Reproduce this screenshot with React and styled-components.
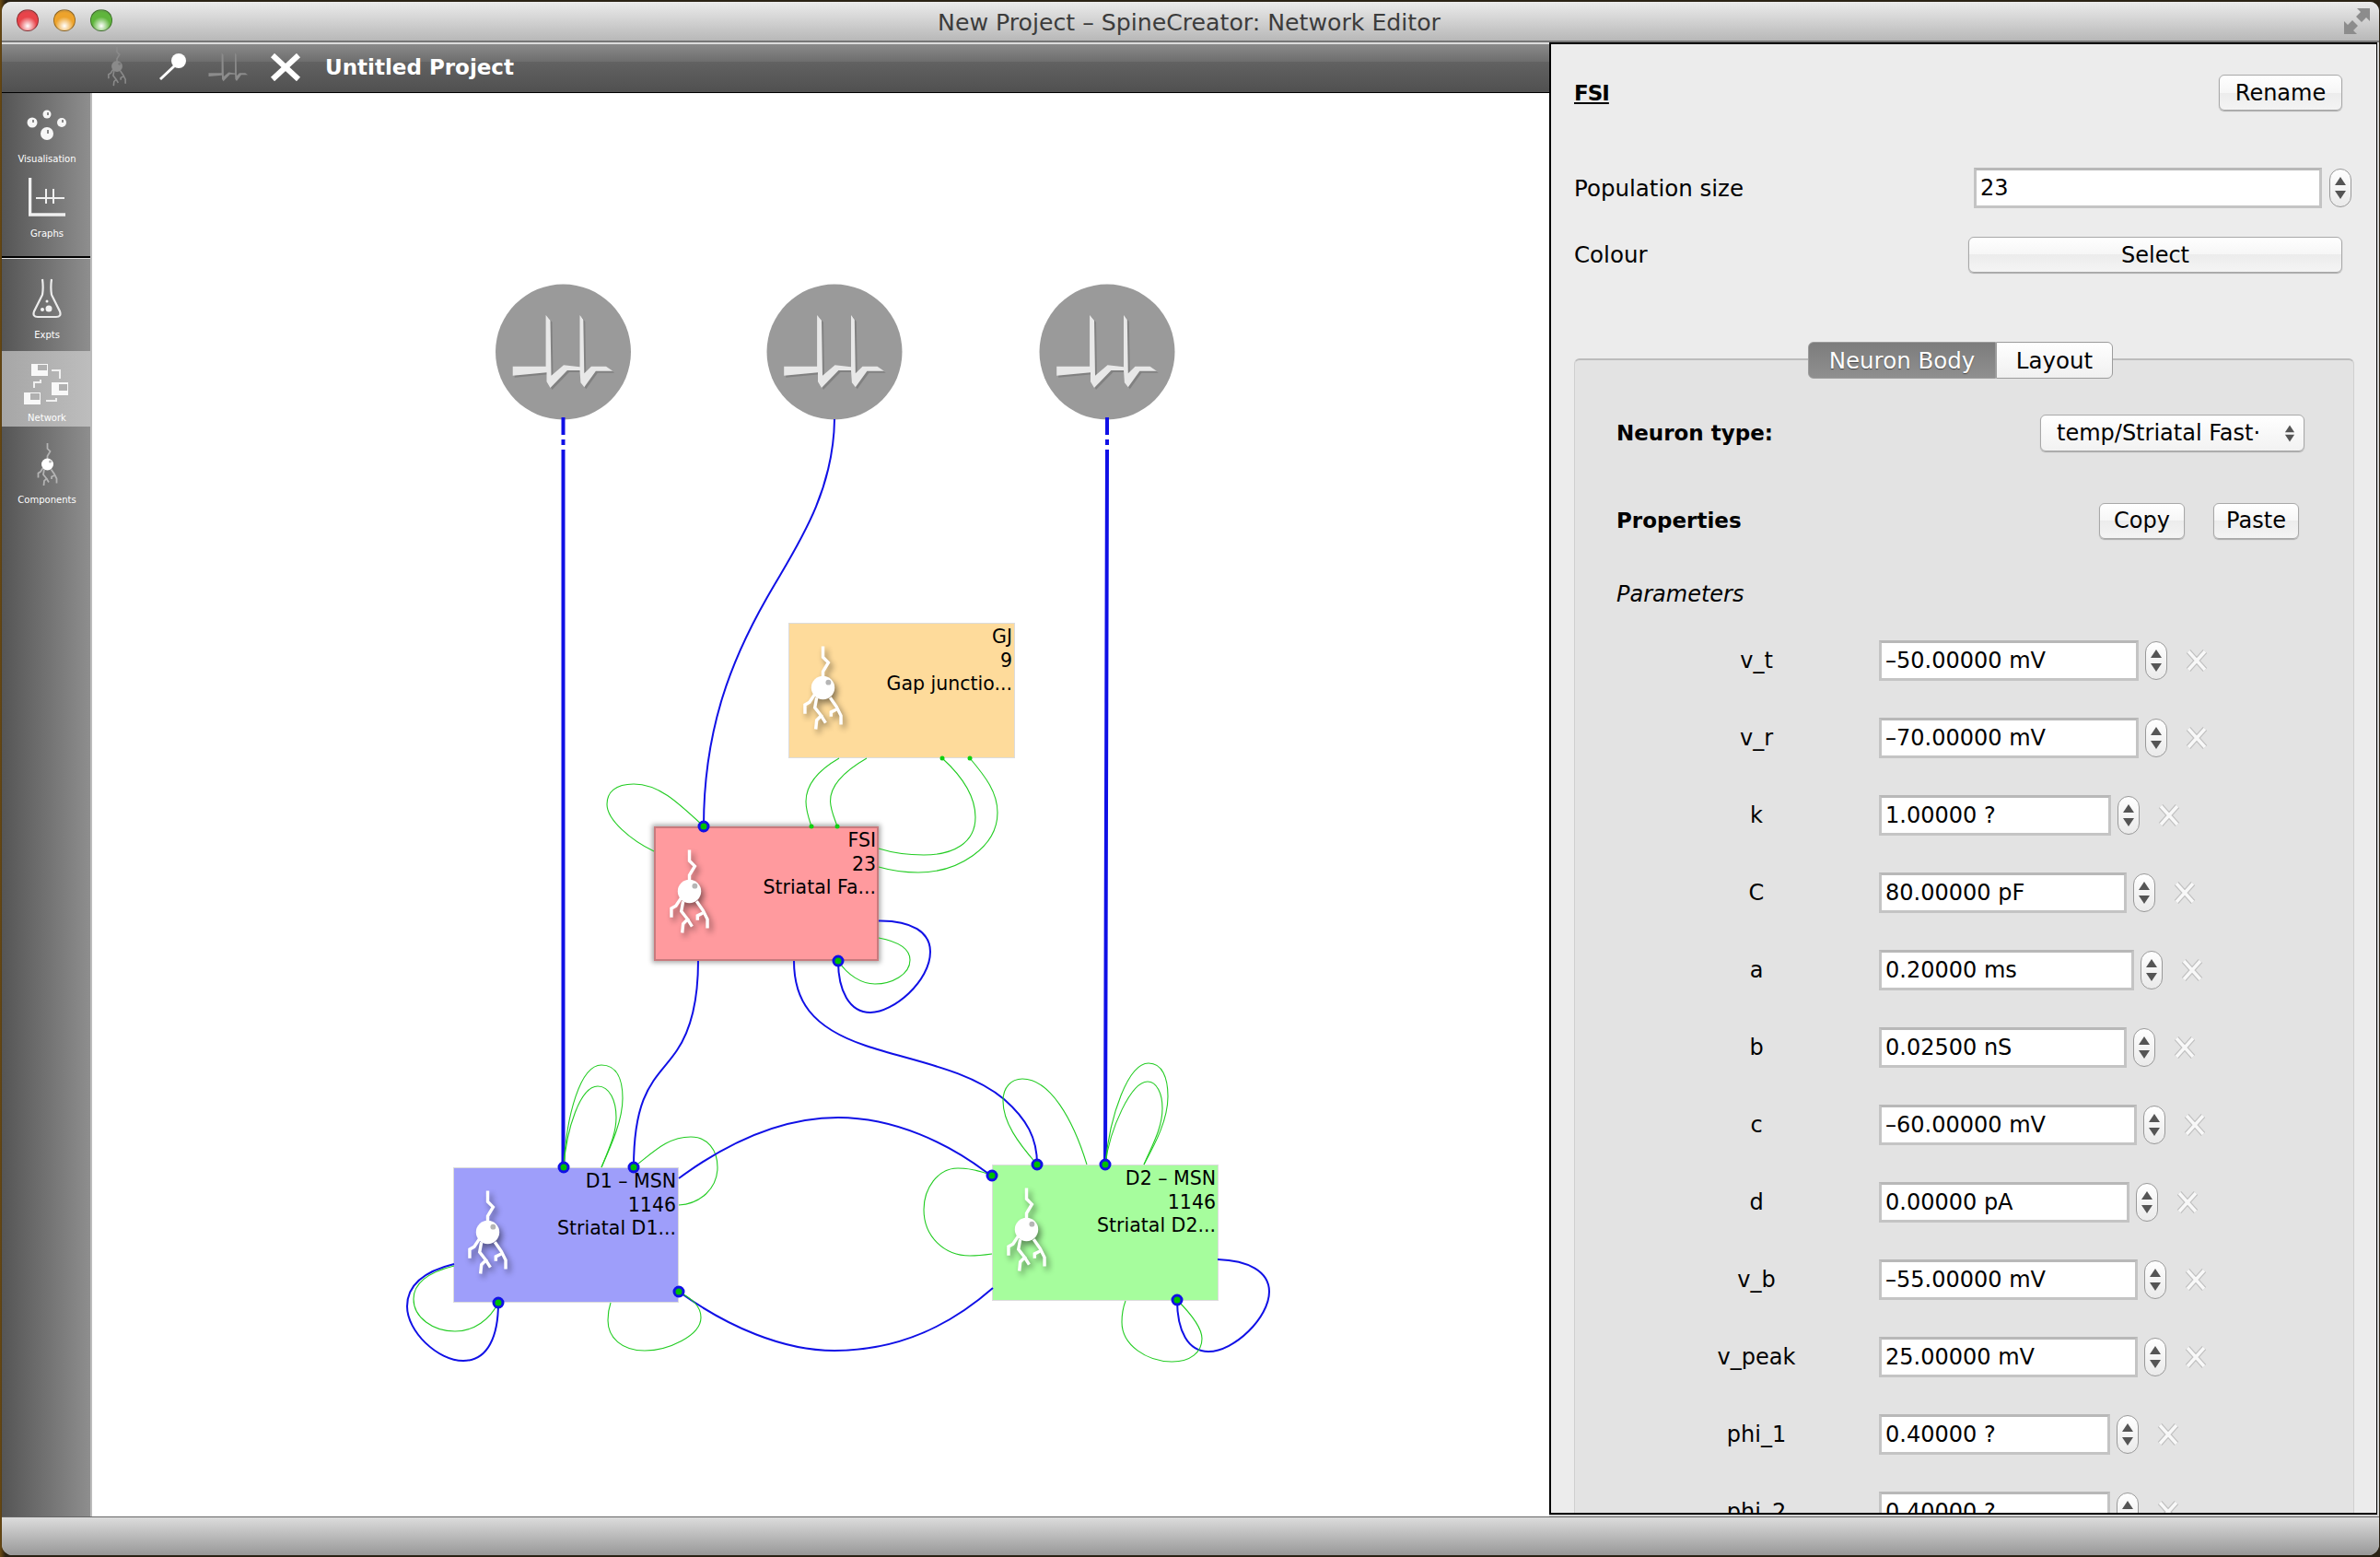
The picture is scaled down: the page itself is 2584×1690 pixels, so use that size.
import React from "react";
import styled, { createGlobalStyle } from "styled-components";

const GlobalStyle = createGlobalStyle`
    html, body {
        margin: 0;
        padding: 0;
        background: #2a2214;
    }
    * { box-sizing: border-box; }
    body {
        font-family: "DejaVu Sans", "Noto Sans", sans-serif;
        color: #000;
    }
`;

const SPIKE_POINTS = "-54.8,25.7 -54.8,15.7 -18.9,15.7 -18.9,-40 -14,-34.3 -13,25.7 .5,14.3 18,16.3 18,-40 21.8,-35 22.8,23.3 30.5,15.7 46.5,15.7 53.8,20.7 35.4,20.7 22.8,38.3 18.9,33.3 18,20 4.4,20 -14,39 -18,32.3 -18,22.3";

const SPIKE_SOURCES = [611.5, 906, 1202];

const WIRES = [
    // spike sources
    { kind: "thick", d: "M611.5 453V472M611.5 477V483M611.5 488V1267" },
    { kind: "thick", d: "M1202 453V472M1202 477V483M1202 488L1200 1264" },
    { kind: "blue", d: "M906 455C905 540 860 600 832 650C795 715 764 790 764 897" },
    // FSI
    { kind: "green", d: "M764 897C735 870 715 851 688 851C668 851 659 860 659 873C659 890 685 912 710 924" },
    { kind: "green", d: "M911 823C885 838 875 853 875 870C875 880 878 888 881 897" },
    { kind: "green", d: "M941 823C915 838 901 853 901.5 870C902 880 906 888 909 897" },
    { kind: "green", d: "M1023 823C1045 843 1059 865 1059 887C1059 915 1035 928 1003 928C985 928 970 926 954 921" },
    { kind: "green", d: "M1053 823C1070 843 1083 860 1083 882C1083 920 1040 947 997 947C980 947 968 945 954 941" },
    { kind: "blue", d: "M954 999.5C990 999 1010 1012 1010 1033C1010 1065 970 1099 945 1099C922 1099 910 1075 910 1043" },
    { kind: "green", d: "M954 1018C975 1022 988 1030 988 1042C988 1058 968 1068 950 1068C935 1068 920 1058 910 1043" },
    { kind: "blue", d: "M758 1043C758 1080 752 1115 735 1140C715 1170 688 1180 688 1267" },
    { kind: "blue", d: "M862 1043C862 1085 880 1115 940 1135C990 1152 1050 1160 1090 1193C1115 1215 1126 1235 1126 1264" },
    // D1
    { kind: "green", d: "M612 1267C615 1210 630 1156 653 1156C670 1156 676 1172 676 1192C676 1215 665 1240 653 1267" },
    { kind: "green", d: "M612 1267C615 1225 630 1179 649 1179C662 1179 669 1195 669 1213C669 1230 662 1245 653 1267" },
    { kind: "green", d: "M688 1267C710 1250 725 1234 750 1234C768 1234 779 1248 779 1267C779 1290 760 1307 737 1308" },
    { kind: "blue", d: "M737 1279C790 1240 850 1213 910 1213C970 1213 1030 1240 1077 1277" },
    { kind: "blue", d: "M737 1402C790 1440 850 1466 906 1466C975 1466 1030 1440 1078 1398" },
    { kind: "green", d: "M737 1402C752 1410 761 1418 761 1430C761 1450 725 1466 700 1466C675 1466 660 1452 660 1433C660 1425 661 1420 663 1414" },
    { kind: "blue", d: "M493 1372C460 1380 442 1395 442 1418C442 1445 475 1477 503 1477C530 1477 541 1450 541 1414" },
    { kind: "green", d: "M493 1374C465 1381 449 1393 449 1410C449 1430 470 1445 494 1445C515 1445 532 1432 541 1414" },
    // D2
    { kind: "green", d: "M1077 1276C1065 1271 1052 1268 1040 1268C1018 1268 1003 1290 1003 1313C1003 1342 1025 1363 1053 1363C1062 1363 1070 1362 1077 1361" },
    { kind: "green", d: "M1126 1264C1105 1240 1089 1218 1089 1195C1089 1180 1098 1171 1110 1171C1140 1171 1165 1215 1180 1264" },
    { kind: "green", d: "M1200 1264C1205 1210 1225 1154 1247 1154C1262 1154 1268 1170 1268 1190C1268 1215 1255 1240 1242 1264" },
    { kind: "green", d: "M1200 1264C1205 1225 1228 1174 1246 1174C1256 1174 1262 1187 1262 1203C1262 1225 1250 1245 1242 1264" },
    { kind: "blue", d: "M1322 1367C1355 1368 1378 1380 1378 1402C1378 1430 1340 1467 1312 1467C1290 1467 1278 1445 1278 1411" },
    { kind: "green", d: "M1222 1412C1219 1420 1218 1427 1218 1435C1218 1460 1245 1478 1273 1478C1292 1478 1305 1468 1305 1453C1305 1440 1292 1425 1278 1411" },
];

const RING_DOTS = [[764, 897], [910, 1043], [612, 1267], [688, 1267], [541, 1414], [737, 1402], [1077, 1276], [1126, 1264], [1200, 1264], [1278, 1411]];
const SMALL_DOTS = [[881, 897], [909, 897], [1023, 823], [1053, 823]];

const NODES = [
    { x: 856, y: 676, w: 246, h: 147, bg: "#fedb9b", lines: ["GJ", "9", "Gap junctio..."] },
    { x: 710, y: 897, w: 244, h: 146, bg: "#ff9a9e", selected: true, lines: ["FSI", "23", "Striatal Fa..."] },
    { x: 492, y: 1267, w: 245, h: 147, bg: "#9e9efa", lines: ["D1 – MSN", "1146", "Striatal D1..."] },
    { x: 1077, y: 1264, w: 246, h: 148, bg: "#a6fd9d", lines: ["D2 – MSN", "1146", "Striatal D2..."] },
];

const PARAMS = [
    ["v_t", "–50.00000 mV", 282],
    ["v_r", "–70.00000 mV", 282],
    ["k", "1.00000 ?", 252],
    ["C", "80.00000 pF", 269],
    ["a", "0.20000 ms", 277],
    ["b", "0.02500 nS", 269],
    ["c", "–60.00000 mV", 280],
    ["d", "0.00000 pA", 272],
    ["v_b", "–55.00000 mV", 281],
    ["v_peak", "25.00000 mV", 281],
    ["phi_1", "0.40000 ?", 251],
    ["phi_2", "0.40000 ?", 251],
];

function NeuronGlyph({ color = "#fff", soma = "#fff", eye = "#b5b5b5", width = 43, height = 93 }) {
    return (
        <svg width={width} height={height} viewBox="0 0 44 94">
            <g fill="none" stroke={color} strokeWidth="3.500">
                <polyline points="22,0 22,12 28,18 22,28 22,36" />
                <polyline points="13,53 7,62 2,65 2,75" />
                <polyline points="15,57 13,68 20,77 15,82 14,92" />
                <polyline points="20,77 25,85" />
                <polyline points="30,57 37,67 42,77 42,87" />
                <polyline points="37,70 31,73 31,78" />
            </g>
            <circle cx="22" cy="46" r="13" fill={soma} />
            <circle cx="28" cy="40" r="3" fill={eye} />
        </svg>
    );
}

function SpikesGlyph({ color, width, height }) {
    return (
        <svg width={width} height={height} viewBox="-56 -42 112 84">
            <polygon points={SPIKE_POINTS} fill={color} />
        </svg>
    );
}

function VisualisationIcon() {
    return (
        <svg width="44" height="34" viewBox="0 0 44 34">
            <g fill="#f6f6f6">
                <circle cx="6" cy="14" r="5.500" />
                <circle cx="22" cy="5" r="4.500" />
                <circle cx="38" cy="14" r="5" />
                <circle cx="22" cy="26" r="7" />
            </g>
            <g stroke="#666" strokeWidth="1.500">
                <line x1="7" y1="11" x2="7" y2="14" />
                <line x1="23" y1="3" x2="23" y2="6" />
                <line x1="39" y1="11" x2="39" y2="14" />
                <line x1="23" y1="22" x2="23" y2="26" />
            </g>
        </svg>
    );
}

function GraphsIcon() {
    return (
        <svg width="40" height="42" viewBox="0 0 40 42">
            <path d="M1.500 0V40H40" fill="none" stroke="#f0f0f0" strokeWidth="3.500" />
            <path d="M8 22H39M19 12V28M27 12V28" fill="none" stroke="#f0f0f0" strokeWidth="2" />
        </svg>
    );
}

function ExptsIcon() {
    return (
        <svg width="32" height="44" viewBox="0 0 32 44">
            <path d="M11 1C12 8 12 12 11 18L2 36Q0 42 6 42H26Q32 42 30 36L21 18C20 12 20 8 21 1" fill="none" stroke="#ececec" strokeWidth="2.200" />
            <g fill="#f2f2f2">
                <circle cx="16" cy="25" r="1.500" />
                <circle cx="18" cy="33" r="3.500" />
                <circle cx="11" cy="34" r="2" />
            </g>
        </svg>
    );
}

function NetworkIcon() {
    return (
        <svg width="50" height="44" viewBox="0 0 50 44">
            <g fill="#f8f8f8">
                <rect x="8" y="0" width="18" height="13" />
                <rect x="30" y="20" width="18" height="14" />
                <rect x="0" y="31" width="18" height="13" />
            </g>
            <g fill="#b0b0b0">
                <rect x="15" y="1" width="10" height="6" />
                <rect x="38" y="22" width="9" height="7" />
                <rect x="7" y="32" width="10" height="7" />
            </g>
            <path d="M30 7H39V16M11 26V20H18V17M24 40H35V37" fill="none" stroke="#f0f0f0" strokeWidth="2" />
        </svg>
    );
}

function PinIcon() {
    return (
        <svg width="30" height="30" viewBox="0 0 30 30">
            <circle cx="22" cy="8" r="8" fill="#fff" />
            <line x1="18" y1="13" x2="2" y2="28" stroke="#fff" strokeWidth="3" />
        </svg>
    );
}

function CloseIcon() {
    return (
        <svg width="34" height="30" viewBox="0 0 34 30">
            <path d="M3 2L31 28M31 2L3 28" stroke="#fff" strokeWidth="6" fill="none" />
        </svg>
    );
}

function ResizeIcon() {
    return (
        <svg width="30" height="28" viewBox="0 0 30 28">
            <g fill="#8c8c8c">
                <path d="M15 0H29V14L25 10L20 15L14 9L19 4Z" />
                <path d="M15 28H1V14L5 18L10 13L16 19L11 24Z" />
            </g>
        </svg>
    );
}

function CrossMark() {
    return (
        <CrossWrap width="24" height="24" viewBox="0 0 24 24">
            <path d="M3 2L21 22M21 2L3 22" stroke="#c0c0c0" strokeWidth="6" fill="none" />
            <path d="M3 2L21 22M21 2L3 22" stroke="#f8f8f8" strokeWidth="3.500" fill="none" />
        </CrossWrap>
    );
}

function Spinner({ $gap }) {
    return (
        <SpinnerBox $gap={$gap}>
            <ArrowUp />
            <ArrowDown />
        </SpinnerBox>
    );
}

export default function App() {
    return (
        <>
            <GlobalStyle />
            <Desktop>
                <Window>
                    <TitleBar>
                        <Lights>
                            <Light $c="#e8444a" />
                            <Light $c="#eda32c" />
                            <Light $c="#5fb53c" />
                        </Lights>
                        <WindowTitle>New Project – SpineCreator: Network Editor</WindowTitle>
                        <ResizeSlot><ResizeIcon /></ResizeSlot>
                    </TitleBar>

                    <Middle>
                        <Workspace>
                            <Toolbar>
                                <ToolSlot $left={114}><NeuronGlyph width={22} height={43} color="#8a8a8a" soma="#8a8a8a" eye="#777" /></ToolSlot>
                                <ToolSlot $left={34}><PinIcon /></ToolSlot>
                                <ToolSlot $left={24}><SpikesGlyph color="#8c8c8c" width={44} height={34} /></ToolSlot>
                                <ToolSlot $left={23}><CloseIcon /></ToolSlot>
                                <ProjectTitle>Untitled Project</ProjectTitle>
                            </Toolbar>

                            <WorkRow>
                                <Sidebar>
                                    <SideItem $h={80} $pad={1} $gap={13}>
                                        <VisualisationIcon />
                                        <SideLabel>Visualisation</SideLabel>
                                    </SideItem>
                                    <SideItem $h={81} $pad={1} $gap={12}>
                                        <GraphsIcon />
                                        <SideLabel>Graphs</SideLabel>
                                    </SideItem>
                                    <SideRule />
                                    <SideItem $h={91} $pad={1} $gap={11}>
                                        <ExptsIcon />
                                        <SideLabel>Expts</SideLabel>
                                    </SideItem>
                                    <SideItem $h={82} $top={9} $pad={2} $gap={8} $active>
                                        <NetworkIcon />
                                        <SideLabel>Network</SideLabel>
                                    </SideItem>
                                    <SideItem $h={88} $pad={1} $gap={8}>
                                        <NeuronGlyph width={23} height={47} color="#b4b4b4" />
                                        <SideLabel>Components</SideLabel>
                                    </SideItem>
                                </Sidebar>

                                <Canvas>
                                    {NODES.map((node) => (
                                        <Node key={node.lines[0]} $x={node.x} $y={node.y} $w={node.w} $h={node.h} $bg={node.bg} $selected={node.selected}>
                                            <NodeGlyph><NeuronGlyph /></NodeGlyph>
                                            <NodeText>
                                                {node.lines.map((line) => <div key={line}>{line}</div>)}
                                            </NodeText>
                                        </Node>
                                    ))}
                                    <Wires viewBox="100 101 1582 1545">
                                        {SPIKE_SOURCES.map((cx) => (
                                            <g key={cx}>
                                                <circle cx={cx} cy="382" r="73.500" fill="#9a9a9a" />
                                                <g transform={`translate(${cx} 382)`}>
                                                    <polygon points={SPIKE_POINTS} fill="#6e6e6e" opacity=".55" transform="translate(2 2)" />
                                                    <polygon points={SPIKE_POINTS} fill="#e8e8e8" />
                                                </g>
                                            </g>
                                        ))}
                                        {WIRES.map((wire) => <Wire key={wire.d} $kind={wire.kind} d={wire.d} />)}
                                        {RING_DOTS.map(([cx, cy]) => <RingDot key={`${cx}-${cy}`} cx={cx} cy={cy} r="5" />)}
                                        {SMALL_DOTS.map(([cx, cy]) => <SmallDot key={`${cx}-${cy}`} cx={cx} cy={cy} r="2.500" />)}
                                    </Wires>
                                </Canvas>
                            </WorkRow>
                        </Workspace>

                        <Panel>
                            <HeadRow>
                                <PopName>FSI</PopName>
                                <PushButton $w={134}>Rename</PushButton>
                            </HeadRow>
                            <FieldRow $top={62}>
                                <FieldLabel>Population size</FieldLabel>
                                <ValueBox $w={378}>23</ValueBox>
                                <PopSpinner><Spinner $gap={8} /></PopSpinner>
                            </FieldRow>
                            <FieldRow $top={31}>
                                <FieldLabel>Colour</FieldLabel>
                                <PushButton $w={406}>Select</PushButton>
                            </FieldRow>

                            <TabBox>
                                <Tabs>
                                    <Tab $w={204} $active>Neuron Body</Tab>
                                    <Tab $w={127}>Layout</Tab>
                                </Tabs>
                                <TabRow $top={39}>
                                    <BoldLabel>Neuron type:</BoldLabel>
                                    <ComboBox>
                                        <ComboText>temp/Striatal Fast·</ComboText>
                                        <ComboArrows><ArrowUp /><ArrowDown /></ComboArrows>
                                    </ComboBox>
                                </TabRow>
                                <TabRow $top={55}>
                                    <BoldLabel>Properties</BoldLabel>
                                    <CopyPaste>
                                        <PushButton $w={93}>Copy</PushButton>
                                        <PushButton $w={93}>Paste</PushButton>
                                    </CopyPaste>
                                </TabRow>
                                <ParamsTitle>Parameters</ParamsTitle>
                                <ParamList>
                                    {PARAMS.map(([name, value, width]) => (
                                        <ParamRow key={name}>
                                            <ParamName>{name}</ParamName>
                                            <ValueBox $w={width}>{value}</ValueBox>
                                            <Spinner $gap={7} />
                                            <CrossMark />
                                        </ParamRow>
                                    ))}
                                </ParamList>
                            </TabBox>
                        </Panel>
                    </Middle>

                    <BottomBar />
                </Window>
            </Desktop>
        </>
    );
}

const Desktop = styled.div`
    width: 2584px;
    height: 1690px;
    padding: 2px 1px 2px 2px;
    overflow: hidden;
    background: linear-gradient(90deg, #6b4a12 0, #2a2214 6px);
`;

const Window = styled.div`
    width: 100%;
    height: 100%;
    display: flex;
    flex-direction: column;
    background: #d6d6d6;
    border-radius: 10px 10px 12px 12px;
    overflow: hidden;
`;

const TitleBar = styled.div`
    height: 44px;
    flex: none;
    display: flex;
    align-items: center;
    padding: 2px 9px 0 16px;
    background: linear-gradient(#ebebeb, #b8b8b8);
    border-bottom: 2px solid #777;
`;

const Lights = styled.div`
    flex: 1;
    display: flex;
    gap: 16px;
    margin-top: -4px;
`;

const Light = styled.div`
    width: 24px;
    height: 24px;
    border-radius: 50%;
    border: 1px solid rgba(0, 0, 0, .35);
    background: radial-gradient(circle at 50% 78%, #fff 0, ${(p) => p.$c} 48%, ${(p) => p.$c} 70%, #555 130%);
`;

const WindowTitle = styled.div`
    font-size: 25.200px;
    color: #3c3c3c;
    margin-right: 10px;
`;

const ResizeSlot = styled.div`
    flex: 1;
    display: flex;
    justify-content: flex-end;
    margin-top: -2px;
`;

const Middle = styled.div`
    flex: 1;
    min-height: 0;
    display: flex;
`;

const Workspace = styled.div`
    width: 1680px;
    flex: none;
    display: flex;
    flex-direction: column;
`;

const Toolbar = styled.div`
    height: 55px;
    flex: none;
    display: flex;
    align-items: center;
    padding-bottom: 3px;
    border-top: 2px solid #dcdcdc;
    border-bottom: 1px solid #000;
    background: linear-gradient(#8a8a8a 0, #6e6e6e 19px, #626262 19px, #505050 100%);
`;

const ToolSlot = styled.div`
    display: flex;
    margin-left: ${(p) => p.$left}px;
`;

const ProjectTitle = styled.div`
    margin-left: 26px;
    font-size: 23px;
    font-weight: bold;
    color: #fff;
`;

const WorkRow = styled.div`
    flex: 1;
    min-height: 0;
    display: flex;
    background: #fff;
`;

const Sidebar = styled.div`
    width: 98px;
    flex: none;
    display: flex;
    flex-direction: column;
    border-right: 2px solid #bbb;
    background: linear-gradient(90deg, #555, #8e8e8e);
`;

const SideItem = styled.div`
    height: ${(p) => p.$h}px;
    flex: none;
    margin-top: ${(p) => p.$top || 0}px;
    padding: 0 0 ${(p) => p.$pad}px 2px;
    display: flex;
    flex-direction: column;
    align-items: center;
    justify-content: flex-end;
    gap: ${(p) => p.$gap}px;
    background: ${(p) => (p.$active ? "linear-gradient(90deg, #a6a6a6, #bdbdbd)" : "none")};
`;

const SideLabel = styled.div`
    height: 14px;
    line-height: 14px;
    font-size: 10px;
    color: #fff;
`;

const SideRule = styled.div`
    height: 3px;
    flex: none;
    margin-top: 16px;
    border-top: 2px solid #000;
    border-bottom: 1px solid #ddd;
`;

const Canvas = styled.div`
    flex: 1;
    position: relative;
    overflow: hidden;
    background: #fff;
`;

const Wires = styled.svg`
    position: absolute;
    inset: 0;
    width: 100%;
    height: 100%;
    pointer-events: none;
`;

const Wire = styled.path`
    fill: none;
    stroke: ${(p) => (p.$kind === "green" ? "#22cc22" : "#1010e6")};
    stroke-width: ${(p) => ({ green: 1.1, blue: 2, thick: 4 }[p.$kind])}px;
`;

const RingDot = styled.circle`
    fill: #00c000;
    stroke: #1010e6;
    stroke-width: 3px;
`;

const SmallDot = styled.circle`
    fill: #10d010;
`;

const Node = styled.div`
    position: absolute;
    left: ${(p) => p.$x - 100}px;
    top: ${(p) => p.$y - 101}px;
    width: ${(p) => p.$w}px;
    height: ${(p) => p.$h}px;
    display: flex;
    justify-content: space-between;
    align-items: flex-start;
    padding: ${(p) => (p.$selected ? "1px 1px 0 15px" : "2px 2px 0 15px")};
    background: ${(p) => p.$bg};
    border: ${(p) => (p.$selected ? "2px solid #c97a7d" : "1px solid #dcdcdc")};
    box-shadow: ${(p) => (p.$selected ? "0 0 5px 2px #aaa" : "none")};
`;

const NodeGlyph = styled.div`
    margin-top: 22px;
    display: flex;
    filter: drop-shadow(3px 4px 3px rgba(0, 0, 0, .45));
`;

const NodeText = styled.div`
    font-size: 20.500px;
    line-height: 25.500px;
    text-align: right;
    white-space: nowrap;
`;

const Panel = styled.div`
    width: 899px;
    height: 1598px;
    flex: none;
    overflow: hidden;
    display: flex;
    flex-direction: column;
    padding: 33px 37px 0 25px;
    background: #ececec;
    border: solid #000;
    border-width: 2px 1px 2px 2px;
`;

const HeadRow = styled.div`
    display: flex;
    justify-content: space-between;
    align-items: center;
    flex: none;
`;

const PopName = styled.div`
    font-size: 23px;
    font-weight: bold;
    text-decoration: underline;
    letter-spacing: -1px;
`;

const PushButton = styled.div`
    width: ${(p) => p.$w}px;
    height: 39px;
    flex: none;
    display: flex;
    align-items: center;
    justify-content: center;
    font-size: 24px;
    background: linear-gradient(#fff 0, #f6f6f6 50%, #ececec 50%, #f4f4f4 100%);
    border: 1px solid #a8a8a8;
    border-radius: 6px;
    box-shadow: 0 1px 1px #aaa;
`;

const FieldRow = styled.div`
    margin-top: ${(p) => p.$top}px;
    flex: none;
    display: flex;
    align-items: center;
`;

const FieldLabel = styled.div`
    flex: 1;
    font-size: 24.500px;
`;

const ValueBox = styled.div`
    width: ${(p) => p.$w}px;
    height: 44px;
    flex: none;
    padding: 0 4px;
    display: flex;
    align-items: center;
    font-size: 24px;
    white-space: nowrap;
    background: #fff;
    border: 3px solid #c4c4c4;
    border-top-color: #b8b8b8;
`;

const PopSpinner = styled.div`
    display: flex;
    margin-right: -10px;
`;

const SpinnerBox = styled.div`
    width: 24px;
    height: 42px;
    flex: none;
    margin-left: ${(p) => p.$gap}px;
    display: flex;
    flex-direction: column;
    align-items: center;
    justify-content: space-between;
    padding: 8px 0;
    background: linear-gradient(#fff, #eaeaea);
    border: 1px solid #999;
    border-radius: 12px;
`;

const ArrowUp = styled.div`
    width: 0;
    height: 0;
    border-left: 6px solid transparent;
    border-right: 6px solid transparent;
    border-bottom: 9px solid #555;
`;

const ArrowDown = styled.div`
    width: 0;
    height: 0;
    border-left: 6px solid transparent;
    border-right: 6px solid transparent;
    border-top: 9px solid #555;
`;

const CrossWrap = styled.svg`
    flex: none;
    margin-left: 20px;
`;

const TabBox = styled.div`
    flex: none;
    height: 1300px;
    margin: 93px -13px 0 0;
    padding: 0 53px 0 45px;
    background: #e3e3e3;
    border: 1px solid #cfcfcf;
    border-top: 2px solid #bcbcbc;
    border-radius: 6px 6px 0 0;
`;

const Tabs = styled.div`
    display: flex;
    margin: -20px 0 0 208px;
    height: 40px;
`;

const Tab = styled.div`
    width: ${(p) => p.$w}px;
    display: flex;
    align-items: center;
    justify-content: center;
    font-size: 24.500px;
    color: ${(p) => (p.$active ? "#fff" : "#000")};
    text-shadow: ${(p) => (p.$active ? "0 1px 1px #444" : "none")};
    background: ${(p) => (p.$active ? "linear-gradient(#7c7c7c, #8f8f8f)" : "linear-gradient(#fff, #f0f0f0)")};
    border: 1px solid #9c9c9c;
    border-radius: ${(p) => (p.$active ? "6px 0 0 6px" : "0 6px 6px 0")};
`;

const TabRow = styled.div`
    margin-top: ${(p) => p.$top}px;
    height: 40px;
    display: flex;
    align-items: center;
    justify-content: space-between;
`;

const BoldLabel = styled.div`
    font-size: 23px;
    font-weight: bold;
`;

const ComboBox = styled.div`
    width: 287px;
    height: 40px;
    display: flex;
    align-items: center;
    padding: 0 9px 0 17px;
    background: linear-gradient(#fff, #f2f2f2);
    border: 1px solid #a8a8a8;
    border-radius: 6px;
    box-shadow: 0 1px 1px #aaa;
`;

const ComboText = styled.div`
    white-space: nowrap;
    font-size: 24px;
`;

const ComboArrows = styled.div`
    margin-left: auto;
    display: flex;
    flex-direction: column;
    gap: 3px;
    transform: scale(.85);
`;

const CopyPaste = styled.div`
    display: flex;
    gap: 31px;
    margin-right: 6px;
`;

const ParamsTitle = styled.div`
    margin-top: 45px;
    height: 30px;
    line-height: 30px;
    font-size: 24px;
    font-style: italic;
`;

const ParamList = styled.div`
    margin-top: 35px;
    display: flex;
    flex-direction: column;
    gap: 40px;
`;

const ParamRow = styled.div`
    height: 44px;
    display: flex;
    align-items: center;
    padding-left: 84px;
`;

const ParamName = styled.div`
    width: 136px;
    margin-right: 65px;
    flex: none;
    text-align: center;
    font-size: 24px;
`;

const BottomBar = styled.div`
    height: 42px;
    flex: none;
    background: linear-gradient(#dcdcdc, #989898);
    border-top: 1px solid #666;
`;
